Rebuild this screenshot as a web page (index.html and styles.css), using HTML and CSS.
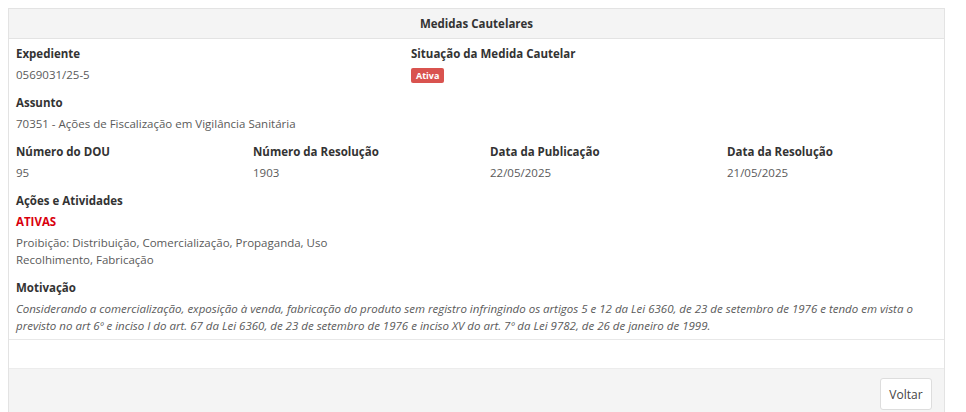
FILE: index.html
```html
<!DOCTYPE html>
<html lang="pt-BR">
<head>
    <meta charset="UTF-8">
    <title>Medidas Cautelares</title>
    <link rel="stylesheet" href="styles.css">
</head>
<body>
    <div class="painel">
        <div class="painel-titulo">Medidas Cautelares</div>

        <div class="painel-corpo">
            <div class="linha linha-2">
                <div class="campo">
                    <label>Expediente</label>
                    <div class="valor">0569031/25-5</div>
                </div>
                <div class="campo">
                    <label>Situação da Medida Cautelar</label>
                    <div class="valor"><span class="etiqueta">Ativa</span></div>
                </div>
            </div>

            <div class="campo">
                <label>Assunto</label>
                <div class="valor">70351 - Ações de Fiscalização em Vigilância Sanitária</div>
            </div>

            <div class="linha linha-4">
                <div class="campo">
                    <label>Número do DOU</label>
                    <div class="valor">95</div>
                </div>
                <div class="campo">
                    <label>Número da Resolução</label>
                    <div class="valor">1903</div>
                </div>
                <div class="campo">
                    <label>Data da Publicação</label>
                    <div class="valor">22/05/2025</div>
                </div>
                <div class="campo">
                    <label>Data da Resolução</label>
                    <div class="valor">21/05/2025</div>
                </div>
            </div>

            <div class="campo">
                <label>Ações e Atividades</label>
                <div class="valor ativas">ATIVAS</div>
                <div class="valor lista">
                    Proibição: Distribuição, Comercialização, Propaganda, Uso<br>
                    Recolhimento, Fabricação
                </div>
            </div>

            <div class="campo ultimo">
                <label>Motivação</label>
                <div class="valor motivo">Considerando a comercialização, exposição à venda, fabricação do produto sem registro infringindo os artigos 5 e 12 da Lei 6360, de 23 de setembro de 1976 e tendo em vista o previsto no art 6º e inciso I do art. 67 da Lei 6360, de 23 de setembro de 1976 e inciso XV do art. 7º da Lei 9782, de 26 de janeiro de 1999.</div>
            </div>
        </div>

        <div class="painel-vazio"></div>

        <div class="painel-rodape">
            <button class="botao" type="button">Voltar</button>
        </div>
    </div>
</body>
</html>
```

FILE: styles.css
```css
body {
    margin: 0;
    padding: 8px 0 0 8px;
    font-family: "Open Sans", Arial, sans-serif;
    font-size: 11.5px;
    color: #5a5a5a;
    background: #fff;
}

.painel {
    width: 937px;
    box-sizing: border-box;
    border: 1px solid #e3e3e3;
    border-bottom: 0;
}

.painel-titulo {
    height: 29px;
    line-height: 29px;
    background-color: #f4f4f4;
    border-bottom: 1px solid #e3e3e3;
    text-align: center;
    font-weight: 700;
    color: #333;
}

.painel-corpo {
    padding: 6px 7px 5px 7px;
    border-bottom: 1px solid #e8e8e8;
}

.linha {
    display: grid;
}
.linha-2 {
    grid-template-columns: 395px 1fr;
}
.linha-4 {
    grid-template-columns: 237px 237px 237px 1fr;
}

.campo {
    margin-bottom: 11px;
}
.campo.ultimo {
    margin-bottom: 0;
}

label {
    display: block;
    font-weight: 700;
    color: #333;
    line-height: 17px;
    margin-bottom: 4px;
}

.valor {
    line-height: 17px;
}

.ativas {
    color: #d9000d;
    font-weight: 700;
    margin-bottom: 4px;
}

.motivo {
    font-style: italic;
}

.etiqueta {
    display: inline-block;
    background-color: #d9534f;
    color: #fff;
    font-size: 9px;
    font-weight: 700;
    line-height: 15px;
    padding: 0 5px;
    border-radius: 2px;
    vertical-align: middle;
}

.painel-vazio {
    height: 28px;
    border-bottom: 1px solid #ececec;
}

.painel-rodape {
    background-color: #f4f4f4;
    height: 60px;
    padding: 9px 12px 0 0;
    display: flex;
    justify-content: flex-end;
    align-items: flex-start;
}

.botao {
    font-family: "Open Sans", Arial, sans-serif;
    font-size: 12px;
    color: #444;
    background: #fff;
    border: 1px solid #ddd;
    border-radius: 3px;
    width: 52px;
    height: 32px;
    padding: 0;
    cursor: pointer;
}
```
